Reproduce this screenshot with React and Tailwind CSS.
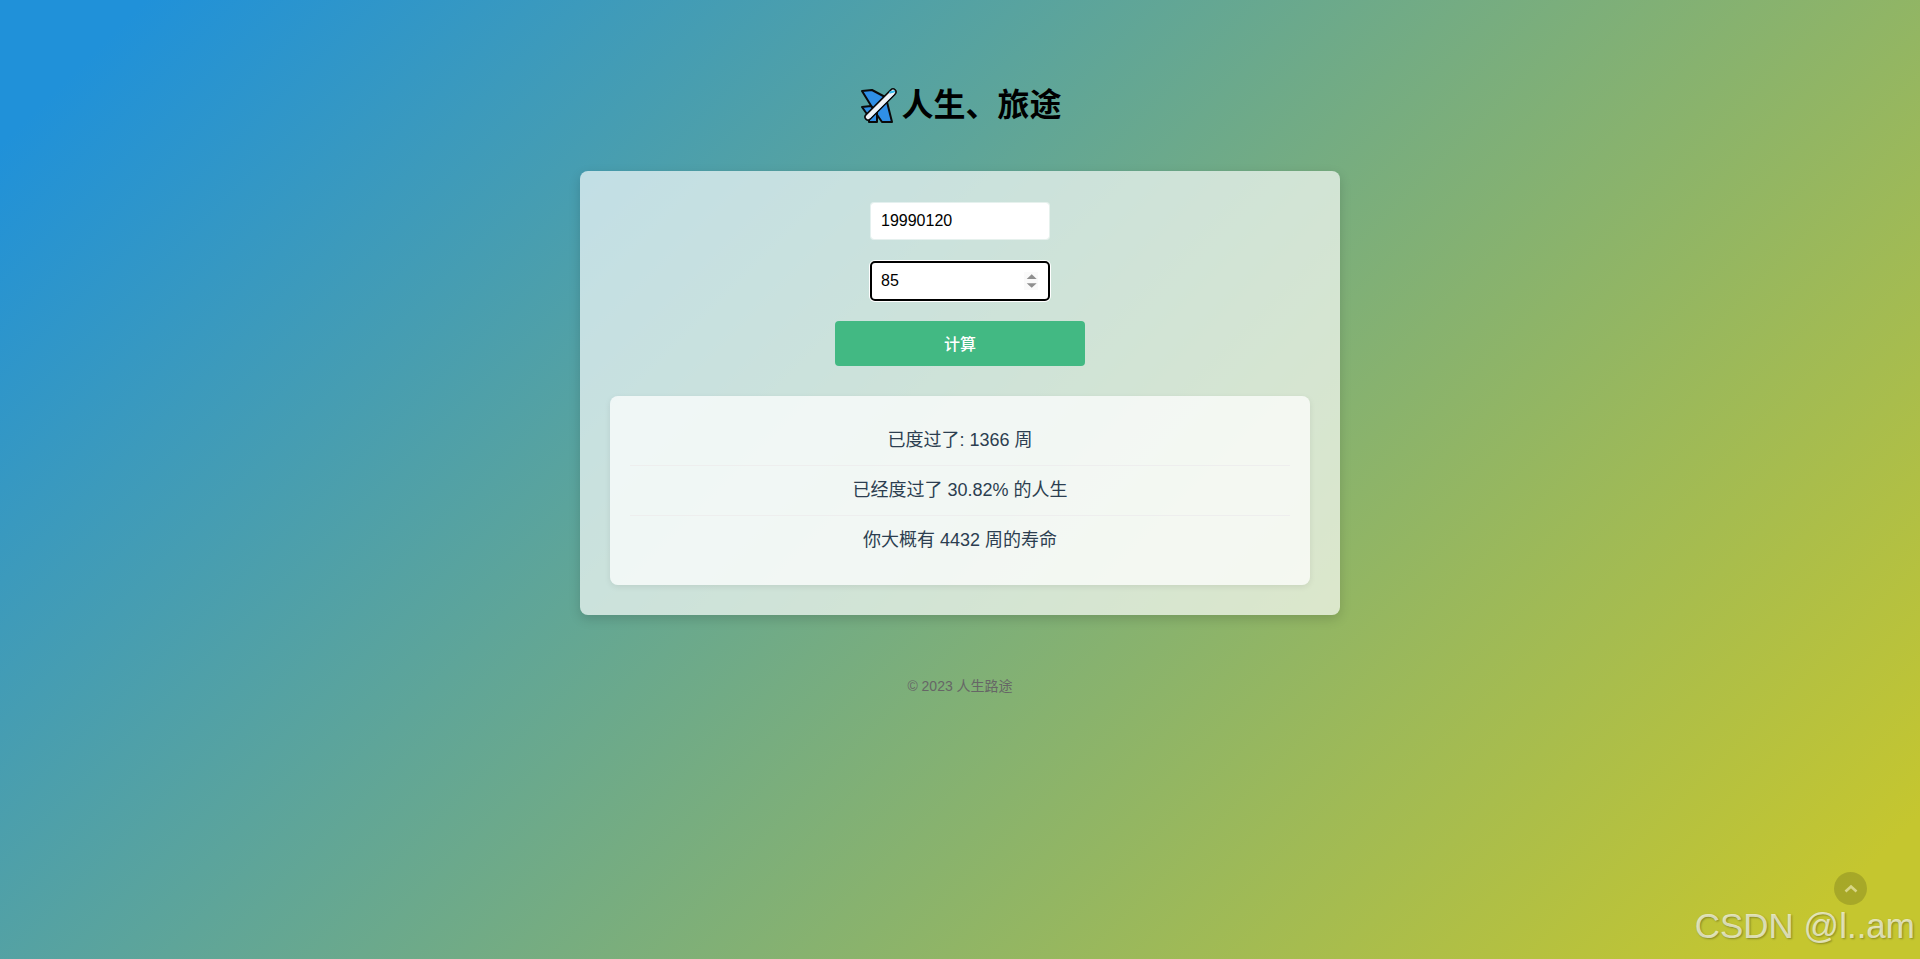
import React from 'react';

const cjk = '"Liberation Sans", "Noto Sans CJK SC", sans-serif';

function Plane() {
  return (
    <svg width="36" height="36" viewBox="0 0 36 36" className="mr-[4px] shrink-0" aria-hidden="true">
      <g fill="#2f8fe6" stroke="#0a0a0a" strokeWidth="2" strokeLinejoin="round">
        <path d="M1 4 L11 3 L26 11 L14 25 Z" />
        <path d="M25 11 L31 35 L21 35 L12 22 Z" />
        <path d="M1 20 L10 19 L16 26 L8 30 Z" />
        <path d="M8 27 L16 26 L16 35 L8 35 Z" />
      </g>
      <path d="M32 5 L7 30" stroke="#0a0a0a" strokeWidth="7.5" strokeLinecap="round" />
      <path d="M32 5 L7 30" stroke="#eef2f6" strokeWidth="4.5" strokeLinecap="round" />
      <path d="M33 7 L9 31" stroke="#bcd3e6" strokeWidth="1" strokeLinecap="round" />
      <path d="M29 5.5 L33 4.5" stroke="#35bdf0" strokeWidth="2" strokeLinecap="round" />
    </svg>
  );
}

// the browser's spin arrows only show on hover, so they are drawn over the field
function SpinArrows() {
  return (
    <svg width="14" height="18" viewBox="0 0 14 18" className="absolute left-[153px] top-[10px] pointer-events-none" aria-hidden="true">
      <rect width="14" height="18" fill="#fafafa" />
      <path d="M7.7 2.3 L12.7 7 L2.7 7 Z" fill="#8f8f8f" />
      <path d="M2.7 11.3 L12.7 11.3 L7.7 15.7 Z" fill="#8f8f8f" />
    </svg>
  );
}

export default function App() {
  return (
    <div
      className="relative min-h-screen overflow-hidden bg-[linear-gradient(135deg,#2091d9_5%,#c5c62f_95%)] text-[#2c3e50] text-center"
      style={{ fontFamily: cjk }}
    >
      <h1 className="pt-[85px] pl-[3px] text-[32px] leading-[40px] font-bold text-black flex items-center justify-center">
        <Plane />
        人生、旅途
      </h1>

      <div className="w-[760px] mx-auto mt-[46px] p-[30px] rounded-lg bg-white/[0.67] shadow-[0_4px_12px_rgba(0,0,0,0.15)]">
        <div className="flex flex-col items-center pt-[1px]">
          <input
            defaultValue="19990120"
            className="w-[180px] h-[38px] px-[10px] rounded bg-white bg-clip-padding text-[16px] text-black border border-white/50 outline-none"
          />
          <div className="relative w-[178px] h-[38px] mt-[22px]">
            <input
              type="number"
              defaultValue="85"
              className="w-full h-full pl-[9px] pr-[10px] rounded bg-white text-[16px] text-black border border-white outline-2 -outline-offset-1 outline-black shadow-[0_0_0_2px_#ffffff]"
            />
            <SpinArrows />
          </div>
          <button className="w-[250px] h-[45px] mt-[21px] pt-[2px] rounded bg-[#42b983] text-white text-[16px] font-medium">
            计算
          </button>
        </div>

        <div className="mt-[30px] py-[20px] px-[20px] rounded-lg bg-white/[0.72] shadow-[0_2px_6px_rgba(0,0,0,0.08)] text-[18px] leading-[29px]">
          <p className="pt-[10px] pb-[10px] border-b border-[#eeeeee]">已度过了: 1366 周</p>
          <p className="pt-[10px] pb-[10px] border-b border-[#eeeeee]">已经度过了 30.82% 的人生</p>
          <p className="pt-[10px] pb-[10px]">你大概有 4432 周的寿命</p>
        </div>
      </div>

      <p className="mt-[61px] text-[14px] leading-[20px] text-[#666666]">© 2023 人生路途</p>

      <button className="absolute left-[1834px] top-[872px] w-[33px] h-[33px] rounded-full bg-black/15 flex items-center justify-center" aria-label="top">
        <svg width="14" height="14" viewBox="0 0 14 14" fill="none">
          <path d="M1.5 9.5 L7 4.5 L12.5 9.5" stroke="#d8d686" strokeWidth="2.6" />
        </svg>
      </button>
      <div className="absolute right-[5px] top-[902px] text-[35px] leading-[48px] text-white/[0.68] whitespace-nowrap [text-shadow:1px_1px_2px_rgba(0,0,0,0.3)]">
        CSDN @l..am
      </div>
    </div>
  );
}
